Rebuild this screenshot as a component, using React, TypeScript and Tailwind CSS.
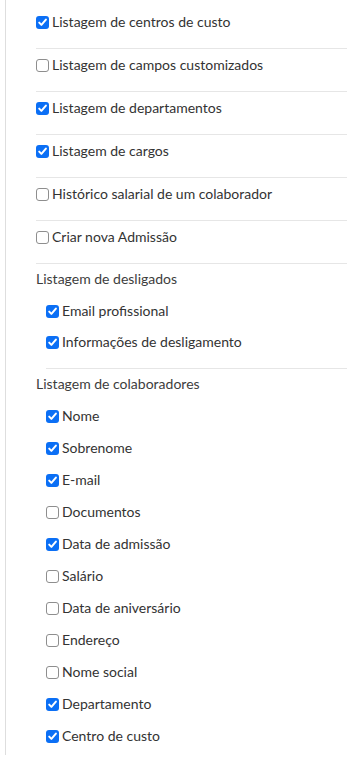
import React from 'react';

type Item = { label: string; checked: boolean };

const topItems: Item[] = [
  { label: 'Listagem de centros de custo', checked: true },
  { label: 'Listagem de campos customizados', checked: false },
  { label: 'Listagem de departamentos', checked: true },
  { label: 'Listagem de cargos', checked: true },
  { label: 'Histórico salarial de um colaborador', checked: false },
  { label: 'Criar nova Admissão', checked: false },
];

const desligados: Item[] = [
  { label: 'Email profissional', checked: true },
  { label: 'Informações de desligamento', checked: true },
];

const colaboradores: Item[] = [
  { label: 'Nome', checked: true },
  { label: 'Sobrenome', checked: true },
  { label: 'E-mail', checked: true },
  { label: 'Documentos', checked: false },
  { label: 'Data de admissão', checked: true },
  { label: 'Salário', checked: false },
  { label: 'Data de aniversário', checked: false },
  { label: 'Endereço', checked: false },
  { label: 'Nome social', checked: false },
  { label: 'Departamento', checked: true },
  { label: 'Centro de custo', checked: true },
];

const Box: React.FC<{ checked: boolean }> = ({ checked }) =>
  checked ? (
    <span className="flex h-[13px] w-[13px] shrink-0 items-center justify-center rounded-[3px] bg-[#0b6ff5]">
      <svg width="11" height="11" viewBox="0 0 11 11" fill="none">
        <path d="M2.2 5.6 L4.4 7.9 L8.9 2.6" stroke="white" strokeWidth="2" strokeLinecap="round" strokeLinejoin="round" />
      </svg>
    </span>
  ) : (
    <span className="h-[13px] w-[13px] shrink-0 rounded-[3px] border border-[#8e8e8e] bg-white" />
  );

const Check: React.FC<Item> = ({ label, checked }) => (
  <label className="flex items-center gap-[3px] leading-[20px]">
    <Box checked={checked} />
    <span>{label}</span>
  </label>
);

export default function App() {
  return (
    <div className="min-h-screen bg-white text-[14px] text-[#333] [font-family:Lato,'Noto_Sans',sans-serif]">
      <div className="ml-[5px] h-[755px] border-l border-[#dedede] pl-[30px] pt-[6px]">
        {topItems.map((item) => (
          <div key={item.label} className="border-b border-[#e6e6e6] pt-[6px] pb-[16px]">
            <Check {...item} />
          </div>
        ))}

        <div className="pt-[5px]">
          <div className="leading-[20px] text-[#3d3d3d]">Listagem de desligados</div>
          <div className="ml-[10px] flex flex-col gap-[11px] border-b border-[#e6e6e6] pt-[12px] pb-[16px]">
            {desligados.map((item) => (
              <Check key={item.label} {...item} />
            ))}
          </div>
        </div>

        <div className="pt-[5px]">
          <div className="leading-[20px] text-[#3d3d3d]">Listagem de colaboradores</div>
          <div className="ml-[10px] flex flex-col gap-[12px] pt-[12px]">
            {colaboradores.map((item) => (
              <Check key={item.label} {...item} />
            ))}
          </div>
        </div>
      </div>
    </div>
  );
}
